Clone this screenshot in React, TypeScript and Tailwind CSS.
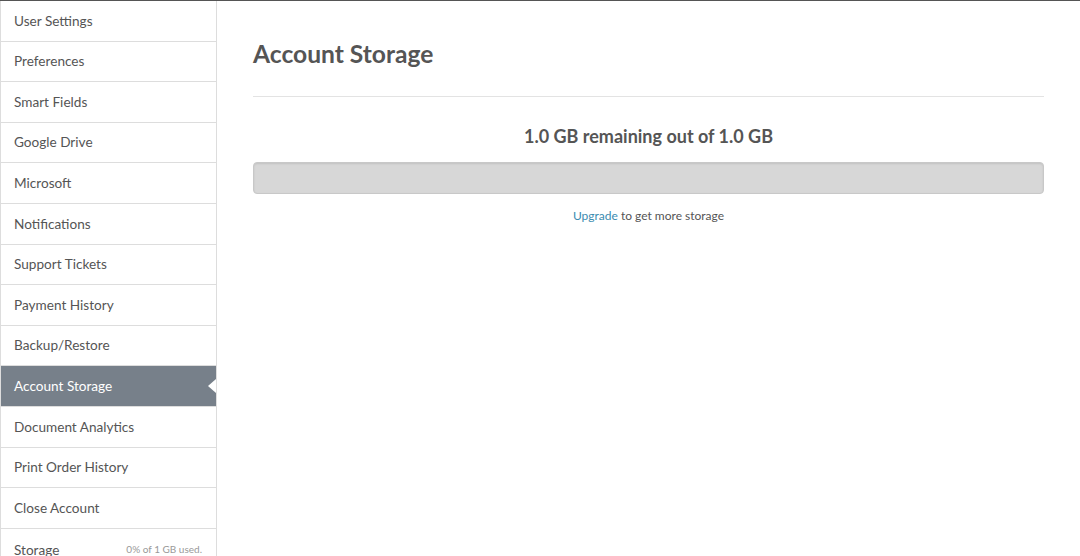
const items = [
  'User Settings',
  'Preferences',
  'Smart Fields',
  'Google Drive',
  'Microsoft',
  'Notifications',
  'Support Tickets',
  'Payment History',
  'Backup/Restore',
  'Account Storage',
  'Document Analytics',
  'Print Order History',
  'Close Account',
]

const ACTIVE = 'Account Storage'

export default function App() {
  return (
    <div
      className="flex h-[556px] w-[1080px] overflow-hidden border-t border-[#555] bg-white text-[#555]"
      style={{ fontFamily: 'Lato, "Noto Sans", sans-serif' }}
    >
      {/* Sidebar */}
      <div className="w-[217px] shrink-0 border-r border-l border-[#ddd]">
        {items.map((label) => {
          const active = label === ACTIVE
          return (
            <div
              key={label}
              className={
                'relative flex h-[40.6px] items-center border-b border-[#ddd] pl-[13px] text-[13.6px] ' +
                (active ? 'bg-[#77808a] text-white' : 'text-[#555]')
              }
            >
              {label}
              {active && (
                <div className="absolute right-0 top-1/2 h-0 w-0 -translate-y-1/2 border-y-[7px] border-r-[8px] border-y-transparent border-r-white" />
              )}
            </div>
          )
        })}
        <div className="flex h-[40px] items-center justify-between pl-[13px] pr-[14px] pt-[2px]">
          <span className="text-[13.6px]">Storage</span>
          <span className="text-[10px] text-[#999]">0% of 1 GB used.</span>
        </div>
      </div>

      {/* Main */}
      <div className="flex-1 px-[36px] pt-[37px]">
        <h1 className="text-[24.6px] font-bold leading-[32px] text-[#555]">Account Storage</h1>
        <div className="mt-[26px] border-t border-[#e3e3e3]" />
        <div className="mt-[27px] text-center text-[18px] font-bold leading-[24px]">
          1.0 GB remaining out of 1.0 GB
        </div>
        <div className="mt-[14px] h-[32px] rounded-[4px] border border-[#c8c8c8] bg-[#d7d7d7] shadow-[inset_0_1px_2px_rgba(0,0,0,0.1)]" />
        <div className="mt-[13px] text-center text-[12px] text-[#555]">
          <span className="text-[#3b8bb0]">Upgrade</span> to get more storage
        </div>
      </div>
    </div>
  )
}
